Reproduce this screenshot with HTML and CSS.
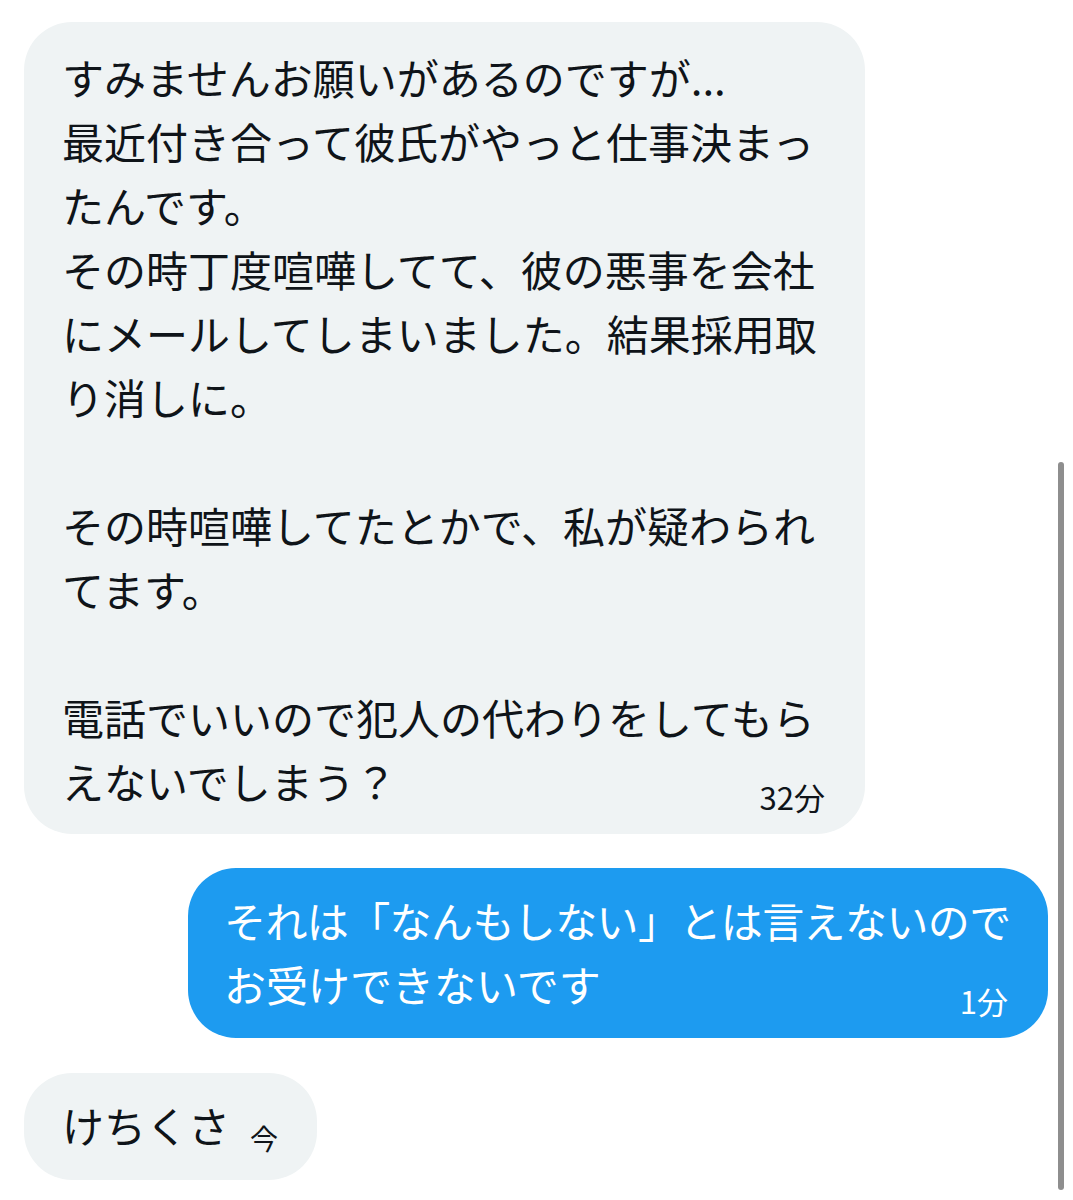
FILE: index.html
```html
<!DOCTYPE html>
<html lang="ja">
<head>
<meta charset="utf-8">
<link rel="stylesheet" href="styles.css">
</head>
<body>
<div class="chat">
  <div class="bubble in big">
    <div class="line">すみませんお願いがあるのですが...</div>
    <div class="line">最近付き合って彼氏がやっと仕事決まっ</div>
    <div class="line">たんです。</div>
    <div class="line">その時丁度喧嘩してて、彼の悪事を会社</div>
    <div class="line">にメールしてしまいました。結果採用取</div>
    <div class="line">り消しに。</div>
    <div class="line">&nbsp;</div>
    <div class="line">その時喧嘩してたとかで、私が疑わられ</div>
    <div class="line">てます。</div>
    <div class="line">&nbsp;</div>
    <div class="line">電話でいいので犯人の代わりをしてもら</div>
    <div class="line last"><span>えないでしまう？</span><span class="time">32分</span></div>
  </div>
  <div class="bubble out">
    <div class="line tight">それは「なんもしない」とは言えないので</div>
    <div class="line last"><span>お受けできないです</span><span class="time">1分</span></div>
  </div>
  <div class="bubble in small">
    <div class="line last"><span>けちくさ</span><span class="time now">今</span></div>
  </div>
</div>
<div class="scrollbar"></div>
</body>
</html>
```

FILE: styles.css
```css
html, body {
  margin: 0;
  padding: 0;
  background: #ffffff;
}
body {
  width: 1073px;
  height: 1200px;
  overflow: hidden;
  position: relative;
  font-family: "Noto Sans CJK JP", "Noto Sans", sans-serif;
  color: #0f1419;
}
.chat {
  display: flex;
  flex-direction: column;
  padding-top: 22px;
}
.bubble {
  border-radius: 48px;
  font-size: 42px;
  line-height: 64px;
  box-sizing: border-box;
}
.line {
  white-space: nowrap;
}
.line.tight {
  letter-spacing: -0.6px;
}
.line.last {
  display: flex;
  justify-content: space-between;
  align-items: flex-end;
}
.time {
  font-size: 31px;
  line-height: 32px;
  margin-bottom: 0;
}
.in {
  background: #eff3f4;
  align-self: flex-start;
  margin-left: 24px;
}
.big {
  width: 841px;
  padding: 23px 40px 21px 38px;
}
.out {
  background: #1d9bf0;
  color: #ffffff;
  align-self: flex-end;
  margin-right: 25px;
  margin-top: 34px;
  width: 860px;
  padding: 20px 40px 22px 36px;
}
.out .time {
  margin-bottom: -1px;
}
.small {
  margin-top: 35px;
  width: 293px;
  padding: 20px 41px 23px 38px;
}
.small .line.last {
  justify-content: flex-start;
  gap: 20px;
}
.time.now {
  font-size: 28px;
  margin-bottom: 3px;
}
.scrollbar {
  position: absolute;
  left: 1058px;
  top: 462px;
  width: 6px;
  height: 728px;
  border-radius: 3px;
  background: #8e8e8e;
}
```
